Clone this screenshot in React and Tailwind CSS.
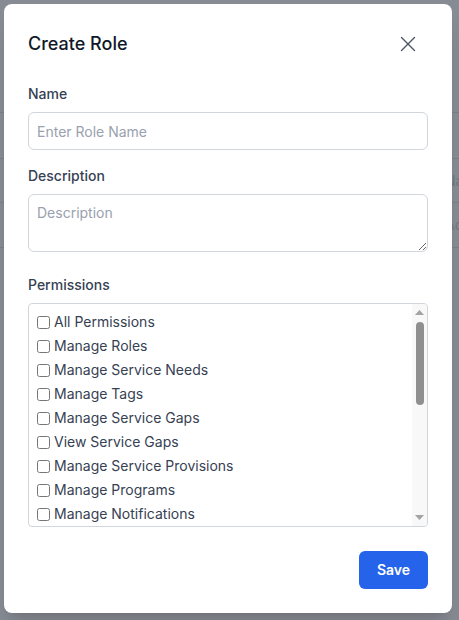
import { useState } from "react";

const permissions = [
  "All Permissions",
  "Manage Roles",
  "Manage Service Needs",
  "Manage Tags",
  "Manage Service Gaps",
  "View Service Gaps",
  "Manage Service Provisions",
  "Manage Programs",
  "Manage Notifications",
  "Manage Users",
  "View Users",
  "Manage Organizations",
  "View Organizations",
  "Manage Clients",
  "View Clients",
  "Manage Reports",
  "View Reports",
  "Manage Settings",
  "Manage Locations",
  "View Audit Logs",
  "Manage Referrals",
  "View Referrals",
];

function CloseIcon() {
  return (
    <svg width="16" height="16" viewBox="0 0 16 16" fill="none" stroke="#4b5563" strokeWidth="1.4" strokeLinecap="round">
      <path d="M1.5 1.5L14.5 14.5M14.5 1.5L1.5 14.5" />
    </svg>
  );
}

// classic scrollbar look, the list itself scrolls with its own bar hidden
function FakeScrollbar() {
  return (
    <div className="flex w-[15px] flex-col items-center bg-[#f8f8f8] py-[6px]">
      <svg width="9" height="5" viewBox="0 0 9 5">
        <path d="M0 5L4.5 0L9 5Z" fill="#a3a3a3" />
      </svg>
      <div className="mt-[7px] h-[83px] w-[8px] rounded-full bg-[#8f8f8f]"></div>
      <div className="flex-1"></div>
      <svg width="9" height="5" viewBox="0 0 9 5">
        <path d="M0 0L4.5 5L9 0Z" fill="#a3a3a3" />
      </svg>
    </div>
  );
}

export default function App() {
  const [checked, setChecked] = useState({});

  return (
    <div className="relative h-[620px] w-[459px] overflow-hidden bg-white" style={{ fontFamily: "Inter, 'Noto Sans', sans-serif" }}>
      {/* page behind the modal */}
      <div className="pt-[112px]">
        <div className="h-[46px] border-t border-gray-200"></div>
        <div className="flex h-[44px] items-center border-t border-gray-200 pl-[445px] text-sm text-gray-300">Name</div>
        <div className="flex h-[46px] items-center border-y border-gray-200 pl-[445px] text-sm text-gray-300">Admin</div>
      </div>

      {/* overlay */}
      <div className="absolute inset-0 flex items-start bg-gray-900/50 p-1">
        <div className="w-[448px] rounded-lg bg-white px-6 pt-6 pb-6 shadow-xl">
          <div className="flex h-8 items-center justify-between">
            <h2 className="text-lg font-medium text-gray-900">Create Role</h2>
            <button className="mr-[8px] flex h-6 w-6 items-center justify-center">
              <CloseIcon />
            </button>
          </div>

          <div className="mt-6">
            <label className="block text-sm font-medium text-gray-700">Name</label>
            <input
              className="mt-2 block h-[38px] w-full rounded-md border border-gray-300 px-2 text-sm text-gray-700 placeholder:text-gray-400 outline-none"
              placeholder="Enter Role Name"
            />
          </div>

          <div className="mt-4">
            <label className="block text-sm font-medium text-gray-700">Description</label>
            <textarea
              className="mt-2 block h-[58px] w-full rounded-md border border-gray-300 px-2 py-2 text-sm text-gray-700 placeholder:text-gray-400 outline-none"
              placeholder="Description"
            />
          </div>

          <div className="mt-[23px]">
            <label className="block text-sm font-medium text-gray-700">Permissions</label>
            <div className="mt-2 flex h-[224px] overflow-hidden rounded border border-gray-300">
              <div className="flex-1 overflow-y-auto py-[6px] pl-2 [scrollbar-width:none]">
                {permissions.map((p) => (
                  <label key={p} className="flex h-6 items-center gap-[4px] text-sm text-gray-700">
                    <input
                      type="checkbox"
                      className="h-[13px] w-[13px]"
                      checked={!!checked[p]}
                      onChange={() => setChecked({ ...checked, [p]: !checked[p] })}
                    />
                    {p}
                  </label>
                ))}
              </div>
              <FakeScrollbar />
            </div>
          </div>

          <div className="mt-6 flex justify-end">
            <button className="h-[38px] w-[69px] rounded-md bg-[#2563eb] text-sm font-semibold text-white">Save</button>
          </div>
        </div>
      </div>
    </div>
  );
}
